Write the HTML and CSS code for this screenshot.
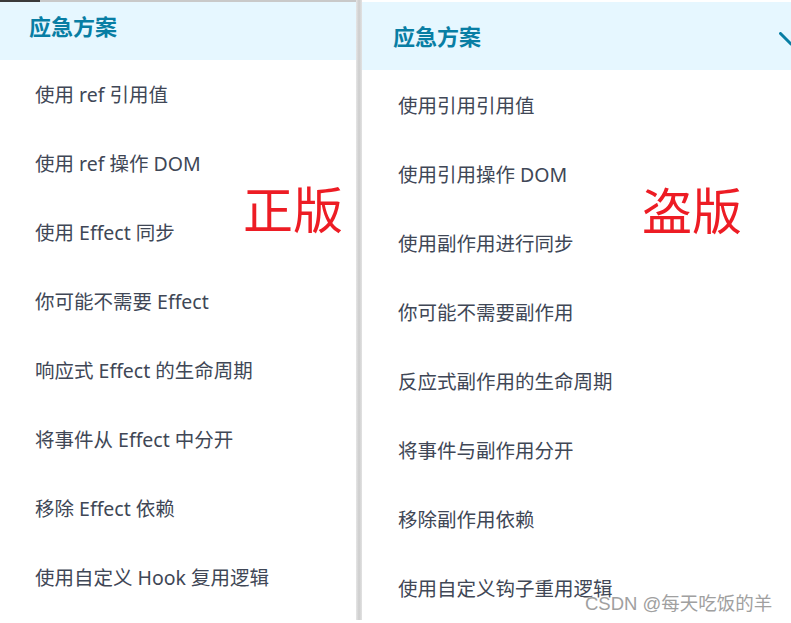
FILE: index.html
```html
<!DOCTYPE html>
<html lang="zh-CN">
<head>
    <meta charset="UTF-8">
    <meta name="viewport" content="width=device-width, initial-scale=1.0">
    <title>应急方案</title>
    <link rel="stylesheet" href="styles.css">
</head>
<body>
    <div class="compare">
        <div class="panel panel-left">
            <div class="top-strip"></div>
            <div class="panel-title title-left">应急方案</div>
            <ul class="menu menu-left">
                <li>使用 ref 引用值</li>
                <li>使用 ref 操作 DOM</li>
                <li>使用 Effect 同步</li>
                <li>你可能不需要 Effect</li>
                <li>响应式 Effect 的生命周期</li>
                <li>将事件从 Effect 中分开</li>
                <li>移除 Effect 依赖</li>
                <li>使用自定义 Hook 复用逻辑</li>
            </ul>
            <div class="stamp stamp-left">正版</div>
        </div>
        <div class="divider"></div>
        <div class="panel panel-right">
            <div class="panel-title title-right">
                <span>应急方案</span>
                <svg class="chevron" width="24" height="14" viewBox="0 0 24 14">
                    <path d="M1.5 1.5 L12 12 L22.5 1.5" fill="none" stroke="#087ea4" stroke-width="3" stroke-linecap="round" stroke-linejoin="round"/>
                </svg>
            </div>
            <ul class="menu menu-right">
                <li>使用引用引用值</li>
                <li>使用引用操作 DOM</li>
                <li>使用副作用进行同步</li>
                <li>你可能不需要副作用</li>
                <li>反应式副作用的生命周期</li>
                <li>将事件与副作用分开</li>
                <li>移除副作用依赖</li>
                <li>使用自定义钩子重用逻辑</li>
            </ul>
            <div class="stamp stamp-right">盗版</div>
        </div>
    </div>
    <div class="watermark">CSDN @每天吃饭的羊</div>
</body>
</html>
```

FILE: styles.css
```css
* {
    margin: 0;
    padding: 0;
    box-sizing: border-box;
}
body {
    width: 791px;
    height: 623px;
    overflow: hidden;
    background: white;
    font-family: "Noto Sans", "Noto Sans CJK SC", sans-serif;
    position: relative;
}
.compare {
    display: flex;
    height: 620px;
}
.panel {
    position: relative;
    background: white;
}
.panel-left {
    width: 356px;
}
.panel-right {
    flex: 1;
    padding-top: 2px;
    overflow: hidden;
}
.divider {
    width: 6px;
    background: linear-gradient(to right, #e6e6e6, #cdcdcd 50%, #e2e2e2);
}
.top-strip {
    height: 2px;
    background: linear-gradient(to right, #3a3a3a 40px, #c9c9c9 40px);
}
.panel-title {
    background: #e6f7ff;
    color: #087ea4;
    font-weight: 700;
    font-size: 22px;
    line-height: 22px;
}
.title-left {
    height: 58px;
    padding: 13px 0 0 29px;
}
.title-right {
    height: 68px;
    padding-left: 31px;
    display: flex;
    align-items: center;
    justify-content: space-between;
}
.chevron {
    margin-right: -12px;
    margin-top: 6px;
}
.menu {
    list-style: none;
    color: #404756;
    font-size: 19.5px;
}
.menu li {
    height: 69px;
    display: flex;
    align-items: center;
}
.menu-left {
    padding-left: 35px;
    margin-top: -1px;
}
.menu-right {
    padding-left: 36px;
}
.stamp {
    position: absolute;
    color: #ed1c24;
    font-size: 50px;
    line-height: 50px;
}
.stamp-left {
    left: 243px;
    top: 185px;
}
.stamp-right {
    left: 280px;
    top: 186px;
}
.watermark {
    position: absolute;
    left: 585px;
    top: 593px;
    font-family: "Liberation Sans", "Noto Sans CJK SC", sans-serif;
    font-size: 18.5px;
    line-height: 22px;
    color: #a0a0a0;
    text-shadow: 0 0 2px white;
}
```
